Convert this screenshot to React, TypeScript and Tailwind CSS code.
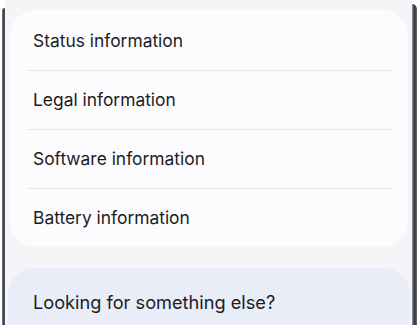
import React from "react";

const items = [
  "Status information",
  "Legal information",
  "Software information",
  "Battery information",
];

export default function App() {
  return (
    <div
      className="w-[420px] h-[325px] bg-white overflow-hidden pl-[2px] pr-[3px]"
      style={{ fontFamily: "Inter, 'Noto Sans', sans-serif" }}
    >
      <div className="flex h-full">
        <div className="w-[3px] mt-[8px] rounded-tl-[6px] bg-gradient-to-r from-[#8a8a92] via-[#3c3c44] to-[#5c5c66]" />
        <div className="flex-1 bg-[#f5f5f7] pl-[5px] pr-[4px] pt-[10px] flex flex-col">
          <div className="bg-[#fcfcfe] rounded-[26px] pl-[18px] pr-[15px] pt-[2px]">
            {items.map((t, i) => (
              <div
                key={t}
                className={
                  "flex items-center px-[5px] text-[17.4px] text-[#1c1c1e] " +
                  (i < items.length - 1 ? "h-[59px] border-b border-[#e6e6e9]" : "h-[58px]")
                }
              >
                {t}
              </div>
            ))}
          </div>
          <div className="mt-[21px] bg-[#e8edf8] rounded-t-[26px] h-[80px] px-[25px] pt-[21px] text-[18.2px] text-[#1c1c1e] -mx-[2px]">
            Looking for something else?
          </div>
        </div>
        <div className="w-[5px] mt-[4px] rounded-tr-[6px] bg-gradient-to-r from-[#9a9aa2] via-[#34343c] to-[#6a6a74]" />
      </div>
    </div>
  );
}
